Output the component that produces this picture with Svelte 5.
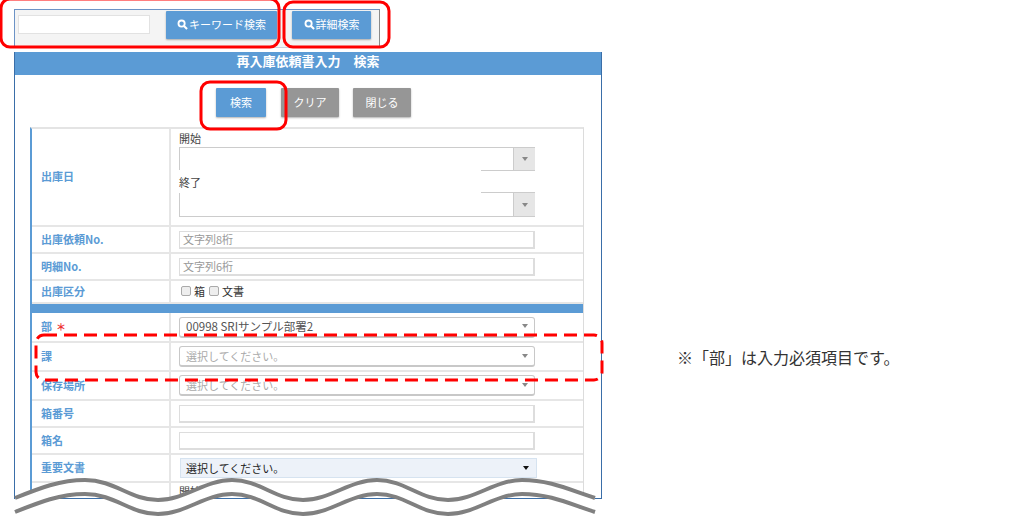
<script>
    const plainRows = [
        { label: "出庫依頼No.", placeholder: "文字列8桁", h: 27 },
        { label: "明細No.", placeholder: "文字列6桁", h: 27 },
    ];
    const deptRows = [
        { label: "部", text: "00998 SRIサンプル部署2", required: true, h: 30 },
        { label: "課", text: "選択してください。", muted: true, h: 29 },
        { label: "保存場所", text: "選択してください。", muted: true, h: 29 },
    ];
    const upper = "M15 498 C40 488 60 480 85 480 C115 480 130 500 158 500 C185 500 205 480 232 480 C260 480 275 500 303 500 C330 500 350 480 377 480 C405 480 420 500 448 500 C475 500 495 480 522 480 C550 480 570 490 595 498";
</script>

<div class="page">
    <main class="left">
        <div class="toolbar">
            <input class="keyword" />
            <button class="btn wide">
                <svg viewBox="0 0 12 12" width="11" height="11"><circle cx="5" cy="5" r="3.4" fill="none" stroke="#fff" stroke-width="2"/><path d="M7.6 7.6 11 11" stroke="#fff" stroke-width="2.2"/></svg>キーワード検索
            </button>
            <button class="btn detail">
                <svg viewBox="0 0 12 12" width="11" height="11"><circle cx="5" cy="5" r="3.4" fill="none" stroke="#fff" stroke-width="2"/><path d="M7.6 7.6 11 11" stroke="#fff" stroke-width="2.2"/></svg>詳細検索
            </button>
        </div>

        <section class="panel">
            <h1>再入庫依頼書入力　検索</h1>
            <div class="actions">
                <button class="btn search">検索</button>
                <button class="btn grey clear">クリア</button>
                <button class="btn grey close">閉じる</button>
            </div>

            <div class="table">
                <div class="row date-row">
                    <div class="label">出庫日</div>
                    <div class="value stack">
                        <span class="cap">開始</span>
                        <div class="date"><span class="arrow-box"><i class="tri"></i></span></div>
                        <span class="cap end">終了</span>
                        <div class="date tall"><span class="arrow-box"><i class="tri"></i></span></div>
                    </div>
                </div>
                {#each plainRows as r}
                    <div class="row" style="height: {r.h}px">
                        <div class="label">{r.label}</div>
                        <div class="value"><div class="field ph">{r.placeholder}</div></div>
                    </div>
                {/each}
                <div class="row" style="height: 23px">
                    <div class="label">出庫区分</div>
                    <div class="value checks">
                        <i class="check"></i><span>箱</span><i class="check"></i><span>文書</span>
                    </div>
                </div>
                <div class="band"></div>
                {#each deptRows as r}
                    <div class="row" style="height: {r.h}px">
                        <div class="label">{r.label}{#if r.required}<em>＊</em>{/if}</div>
                        <div class="value">
                            <div class="select" class:muted={r.muted}>{r.text}<i class="tri"></i></div>
                        </div>
                    </div>
                {/each}
                <div class="row" style="height: 27px">
                    <div class="label">箱番号</div>
                    <div class="value"><div class="field"></div></div>
                </div>
                <div class="row" style="height: 27px">
                    <div class="label">箱名</div>
                    <div class="value"><div class="field"></div></div>
                </div>
                <div class="row" style="height: 28px">
                    <div class="label">重要文書</div>
                    <div class="value"><div class="native">選択してください。<i class="tri dark"></i></div></div>
                </div>
                <div class="row last">
                    <div class="label"></div>
                    <div class="value top"><span class="cap">開始</span></div>
                </div>
            </div>
        </section>
    </main>

    <p class="note">※「部」は入力必須項目です。</p>

    <svg class="overlay" width="1024" height="516" viewBox="0 0 1024 516">
        <path d={`${upper} L595 512 C570 504 550 494 522 494 C495 494 475 514 448 514 C420 514 405 494 377 494 C350 494 330 514 303 514 C275 514 260 494 232 494 C205 494 185 514 158 514 C130 514 115 494 85 494 C60 494 40 502 15 512 Z`} fill="#fff"/>
        <path d={upper} class="wave"/>
        <path d={upper} class="wave" transform="translate(0 14)"/>
        <g fill="none" stroke="#f00" stroke-width="3">
            <rect x="1" y="-1" width="278" height="48" rx="9"/>
            <rect x="284" y="2" width="105" height="45" rx="9"/>
            <rect x="201" y="82" width="85" height="47" rx="9"/>
            <rect x="36" y="335" width="566" height="45" rx="8" stroke-dasharray="13 7"/>
        </g>
    </svg>
</div>

<style>
    :global(body) {
        margin: 0;
        background: #fff;
    }
    .page {
        position: relative;
        width: 1024px;
        height: 516px;
        overflow: hidden;
        display: flex;
        font-family: "Noto Sans CJK JP", "Liberation Sans", sans-serif;
        font-size: 11px;
        color: #333;
    }
    .left {
        width: 588px;
        padding: 9px 0 0 14px;
        flex: none;
    }
    .toolbar {
        display: flex;
        align-items: flex-start;
        width: 361px;
        height: 37px;
        padding-left: 3px;
        background: #f4f4f4;
        border: 1px solid #c8d2e0;
        border-top-color: #6c93c6;
        border-left-color: #6c93c6;
        border-right-color: #8a8a8a;
    }
    .keyword {
        width: 132px;
        height: 19px;
        margin: 5px 16px 0 0;
        padding: 0;
        box-sizing: border-box;
        background: #fff;
        border: 1px solid #e2e2e2;
    }
    .btn {
        display: flex;
        align-items: center;
        justify-content: center;
        gap: 1px;
        box-sizing: border-box;
        height: 28px;
        padding: 0 0 2px;
        border: 0;
        border-radius: 1px;
        background: #5b9bd5;
        color: #fff;
        font: inherit;
        box-shadow: 0 1px 2px rgba(0, 0, 0, 0.3);
    }
    .wide {
        width: 111px;
        margin: 1px 15px 0 0;
    }
    .detail {
        width: 79px;
        margin-top: 1px;
    }
    .panel {
        width: 586px;
        height: 446px;
        margin-top: 4px;
        overflow: hidden;
        background: #fff;
        border: 1px solid #3a6ea8;
        border-top: 0;
    }
    h1 {
        margin: 0;
        height: 23px;
        line-height: 18px;
        background: #5b9bd5;
        color: #fff;
        font-size: 13px;
        font-weight: 700;
        text-align: center;
    }
    .actions {
        display: flex;
        height: 29px;
        padding: 13px 0 10px 201px;
    }
    .search {
        width: 50px;
        margin-right: 15px;
    }
    .btn.grey {
        background: #969696;
    }
    .clear {
        width: 58px;
        margin-right: 14px;
    }
    .close {
        width: 58px;
    }
    .btn.search,
    .btn.clear,
    .btn.close {
        height: 29px;
    }
    .table {
        width: 551px;
        margin-left: 15px;
        border-top: 2px solid #e4e4e4;
        border-left: 2px solid #5b9bd5;
        border-right: 1px solid #dcdcdc;
    }
    .row {
        display: grid;
        grid-template-columns: 139px 1fr;
        box-sizing: border-box;
        border-bottom: 2px solid #e6e6e6;
    }
    .date-row {
        height: 98px;
    }
    .last {
        height: 40px;
        border-bottom: 0;
    }
    .label {
        display: flex;
        align-items: center;
        padding: 0 0 2px 9px;
        color: #5b9bd5;
        font-weight: 700;
        border-right: 2px solid #e6e6e6;
    }
    .label em {
        margin-left: 4px;
        color: #e33;
        font-style: normal;
        font-size: 10px;
    }
    .value {
        display: flex;
        align-items: center;
        padding-left: 8px;
        min-width: 0;
    }
    .top {
        align-items: flex-start;
    }
    .stack {
        flex-direction: column;
        align-items: flex-start;
        padding-top: 1px;
    }
    .cap {
        color: #444;
        line-height: 17px;
    }
    .stack .cap {
        height: 17px;
    }
    .stack .end {
        position: relative;
        width: 302px;
        height: 23px;
        margin: -1px 0;
        line-height: 24px;
        background: #fff;
    }
    .date {
        display: flex;
        justify-content: flex-end;
        box-sizing: border-box;
        width: 356px;
        height: 24px;
        border: 1px solid #ccc;
        border-right: 0;
        flex: none;
    }
    .date.tall {
        height: 25px;
    }
    .arrow-box {
        display: flex;
        align-items: center;
        justify-content: center;
        width: 21px;
        background: #e6e6e6;
        border-left: 1px solid #ccc;
    }
    .tri {
        width: 0;
        height: 0;
        border: 3.5px solid transparent;
        border-top: 4px solid #888;
        border-bottom: 0;
    }
    .tri.dark {
        border-top-color: #111;
    }
    .field {
        box-sizing: border-box;
        width: 356px;
        height: 18px;
        padding-left: 3px;
        line-height: 14px;
        border: 1px solid #ddd;
        border-right-width: 2px;
        border-bottom-width: 2px;
    }
    .ph {
        color: #999;
    }
    .checks {
        gap: 3px;
        padding: 0 0 2px 10px;
    }
    .checks span {
        margin-right: 1px;
    }
    .check {
        box-sizing: border-box;
        width: 10px;
        height: 10px;
        border: 1px solid #aaa;
        border-radius: 2px;
        background: #eee;
    }
    .band {
        height: 9px;
        background: #5b9bd5;
    }
    .select {
        display: flex;
        align-items: center;
        justify-content: space-between;
        box-sizing: border-box;
        width: 356px;
        height: 21px;
        padding: 0 6px 1px;
        border: 1px solid #c8c8c8;
        border-bottom-width: 2px;
        border-radius: 3px;
        color: #555;
        font-size: 11.5px;
    }
    .select.muted {
        color: #aaa;
        font-size: 11px;
    }
    .native {
        display: flex;
        align-items: center;
        justify-content: space-between;
        box-sizing: border-box;
        width: 357px;
        height: 20px;
        margin-left: 1px;
        padding: 0 7px 1px 5px;
        background: #edf2f9;
        border: 1px solid #d6e3f0;
        color: #222;
    }
    .note {
        margin: 345px 0 0 75px;
        height: 24px;
        font-size: 16px;
        line-height: 24px;
        color: #333;
        white-space: nowrap;
    }
    .overlay {
        position: absolute;
        left: 0;
        top: 0;
        pointer-events: none;
    }
    .wave {
        fill: none;
        stroke: #808080;
        stroke-width: 4;
    }
</style>
